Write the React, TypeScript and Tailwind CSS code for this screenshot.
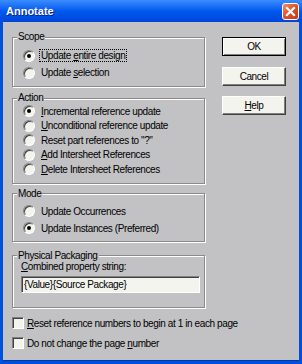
const font = "font-['Liberation_Sans',Arial,sans-serif]";

function Radio({ checked }: { checked?: boolean }) {
  return (
    <span className="w-[12px] h-[12px] rounded-full bg-[#f4f4ee] border border-t-[#808080] border-l-[#808080] border-b-white border-r-white shadow-[inset_1px_1px_0_#404040] flex items-center justify-center shrink-0">
      {checked && <span className="w-[4px] h-[4px] rounded-full bg-black" />}
    </span>
  );
}

function Check() {
  return (
    <span className="w-[12px] h-[12px] bg-[#f4f4ee] border border-t-[#808080] border-l-[#808080] border-b-white border-r-white shadow-[inset_1px_1px_0_#404040] shrink-0" />
  );
}

function U({ children }: { children: React.ReactNode }) {
  return <span className="underline underline-offset-[1px]">{children}</span>;
}

function RadioRow({
  checked,
  h,
  children,
  focus,
}: {
  checked?: boolean;
  h: string;
  children: React.ReactNode;
  focus?: boolean;
}) {
  return (
    <div className={`flex items-center gap-[4px] whitespace-nowrap ${h}`}>
      <Radio checked={checked} />
      <span className={focus ? "border border-dotted border-black px-[1px] leading-[11px]" : "px-[2px] leading-[11px]"}>
        {children}
      </span>
    </div>
  );
}

function Group({ title, className, children }: { title: string; className?: string; children: React.ReactNode }) {
  return (
    <fieldset
      className={`border border-[#8a8a8a] shadow-[1px_1px_0_#fff,inset_1px_1px_0_#fff] ${className ?? ""}`}
    >
      <legend className="ml-[4px] px-[1px] leading-[12px] bg-[#c2c2c4]">{title}</legend>
      {children}
    </fieldset>
  );
}

function Button({ children, def }: { children: React.ReactNode; def?: boolean }) {
  return (
    <div
      className={`w-[64px] h-[19px] flex items-center justify-center bg-[#f4f4ee] ${
        def
          ? "border border-black shadow-[inset_1px_1px_0_#fff,inset_-1px_-1px_0_#808080]"
          : "border border-t-white border-l-white border-b-[#404040] border-r-[#404040] shadow-[inset_-1px_-1px_0_#808080]"
      }`}
    >
      {children}
    </div>
  );
}

export default function App() {
  return (
    <div className={`w-[302px] h-[364px] flex flex-col bg-[#0050dc] ${font} text-[10px] tracking-[-0.4px] text-black`}>
      {/* title bar */}
      <div className="h-[22px] flex items-center justify-between pl-[6px] pr-[3px] bg-gradient-to-b from-[#3a8cff] via-[#0058ee] to-[#0046d8]">
        <span className="text-white font-bold text-[11px] tracking-[0px] [text-shadow:1px_1px_0_#0a1e8c]">Annotate</span>
        <span className="w-[17px] h-[17px] rounded-[3px] border border-white bg-gradient-to-br from-[#f08a64] via-[#e0502a] to-[#c0381a] flex items-center justify-center">
          <svg width="11" height="11" viewBox="0 0 11 11">
            <path d="M2 2 L9 9 M9 2 L2 9" stroke="white" strokeWidth="2.2" strokeLinecap="square" />
          </svg>
        </span>
      </div>

      {/* body */}
      <div className="flex-1 mx-[3px] mb-[3px] bg-[#c2c2c4] flex border-b border-[#0038b0]">
        <div className="w-[193px] shrink-0 ml-[9px] pt-[9px] flex flex-col">
          <Group title="Scope">
            <div className="pl-[10px] pt-[4px] pb-[5px]">
              <RadioRow checked h="h-[17px]" focus>
                Update <U>e</U>ntire design
              </RadioRow>
              <RadioRow h="h-[17px]">
                Update <U>s</U>election
              </RadioRow>
            </div>
          </Group>

          <Group title="Action" className="mt-[5px]">
            <div className="pl-[10px] pb-[6px]">
              <RadioRow checked h="h-[14.5px]">
                <U>I</U>ncremental reference update
              </RadioRow>
              <RadioRow h="h-[14.5px]">
                <U>U</U>nconditional reference update
              </RadioRow>
              <RadioRow h="h-[14.5px]">Reset part references to "?"</RadioRow>
              <RadioRow h="h-[14.5px]">
                <U>A</U>dd Intersheet References
              </RadioRow>
              <RadioRow h="h-[14.5px]">
                <U>D</U>elete Intersheet References
              </RadioRow>
            </div>
          </Group>

          <Group title="Mode" className="mt-[4px]">
            <div className="pl-[10px] pt-[3px] pb-[4px]">
              <RadioRow h="h-[17px]">Update Occurrences</RadioRow>
              <RadioRow checked h="h-[17px]">
                Update Instances (Preferred)
              </RadioRow>
            </div>
          </Group>

          <Group title="Physical Packaging" className="mt-[8px]">
            <div className="pl-[8px] pr-[4px] pb-[14px]">
              <div className="h-[10px] leading-[10px]">
                <U>C</U>ombined property string:
              </div>
              <div className="mt-[4.5px] h-[17px] bg-[#f4f4ee] border border-t-[#808080] border-l-[#808080] border-b-white border-r-white shadow-[inset_1px_1px_0_#404040] flex items-center pl-[2px]">
                {"{Value}{Source Package}"}
              </div>
            </div>
          </Group>

          <div className="mt-[8px] h-[14px] flex items-center gap-[3px] whitespace-nowrap">
            <Check />
            <span>
              <U>R</U>eset reference numbers to begin at 1 in each page
            </span>
          </div>
          <div className="mt-[6px] h-[14px] flex items-center gap-[3px] whitespace-nowrap">
            <Check />
            <span>
              Do not change the page <U>n</U>umber
            </span>
          </div>
        </div>

        <div className="ml-[17px] pt-[15px] flex flex-col gap-[10.5px]">
          <Button def>OK</Button>
          <Button>Cancel</Button>
          <Button>
            <U>H</U>elp
          </Button>
        </div>
      </div>
    </div>
  );
}
